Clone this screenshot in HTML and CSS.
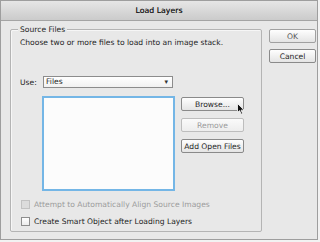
FILE: index.html
```html
<!DOCTYPE html>
<html lang="en">
<head>
  <meta charset="UTF-8">
  <title>Load Layers</title>
  <link rel="stylesheet" href="styles.css">
</head>
<body>
  <div class="window">
    <div class="titlebar">Load Layers</div>
    <div class="content">
      <div class="group">
        <span class="legend">Source Files</span>
        <p class="desc">Choose two or more files to load into an image stack.</p>

        <div class="use-row">
          <label class="use-label">Use:</label>
          <div class="select">
            <span>Files</span>
            <span class="arrow">&#9662;</span>
          </div>
        </div>

        <div class="files-row">
          <div class="listbox"></div>
          <div class="file-buttons">
            <button class="btn">Browse...</button>
            <button class="btn disabled">Remove</button>
            <button class="btn">Add Open Files</button>
            <!-- mouse pointer over Browse -->
            <svg class="cursor" width="8" height="12" viewBox="0 0 8 12">
              <path d="M0.5 0.5 L0.5 9.5 L2.6 7.6 L4.2 11.2 L5.6 10.6 L4.1 7.1 L7 7.1 Z" fill="#111" stroke="#fff" stroke-width="0.8"/>
            </svg>
          </div>
        </div>

        <div class="check disabled">
          <span class="box"></span>
          <span>Attempt to Automatically Align Source Images</span>
        </div>
        <div class="check">
          <span class="box"></span>
          <span>Create Smart Object after Loading Layers</span>
        </div>
      </div>

      <div class="side-buttons">
        <button class="btn default">OK</button>
        <button class="btn">Cancel</button>
      </div>
    </div>
  </div>
</body>
</html>
```

FILE: styles.css
```css
/* Load Layers dialog */
body {
  margin: 0;
  padding: 0;
  width: 320px;
  height: 242px;
  background-color: #f2f2f2;
  font-family: "DejaVu Sans", sans-serif;
  font-size: 7.6px;
  color: #1e1e1e;
  overflow: hidden;
}

.window {
  width: 316px;
  height: 238px;
  border: 1px solid #9e9e9e;
  background-color: #e8e8e8;
}

.titlebar {
  height: 19px;
  line-height: 19px;
  text-align: center;
  font-size: 7.8px;
  color: #1a1a1a;
  text-shadow: 0 0 0.2px #555;
  background: linear-gradient(#e6e6e6, #cbcbcb);
  border-bottom: 1px solid #a4a4a4;
}

.content {
  display: flex;
  padding: 8px 0 0 9px;
}

.group {
  position: relative;
  width: 241px;
  height: 201px;
  border: 1px solid #b4b4b4;
  border-radius: 2px;
  box-shadow: inset 1px 1px 0 #f6f6f6;
  padding-left: 9px;
  box-sizing: content-box;
}

.legend {
  position: absolute;
  top: -6px;
  left: 7px;
  padding: 0 2px;
  background-color: #e8e8e8;
  line-height: 11px;
}

.desc {
  margin: 7px 0 0 0;
  line-height: 11px;
}

.use-row {
  display: flex;
  align-items: center;
  margin-top: 28px;
  height: 12px;
}

.use-label {
  width: 23px;
}

.select {
  position: relative;
  width: 126px;
  height: 10px;
  line-height: 10px;
  padding-left: 2px;
  border: 1px solid #8c8c8c;
  background: linear-gradient(#ffffff, #f1f1f1);
}

.select .arrow {
  position: absolute;
  right: 4px;
  top: 0;
  font-size: 7px;
  color: #333;
}

.files-row {
  display: flex;
  margin-top: 8px;
  margin-left: 22px;
  height: 95px;
}

.listbox {
  width: 129px;
  height: 91px;
  background-color: #fcfcfc;
  border: 2px solid #74b6e6;
}

.file-buttons {
  position: relative;
  display: flex;
  flex-direction: column;
  gap: 7px;
  margin-left: 6px;
  margin-top: 1px;
}

.btn {
  display: block;
  width: 63px;
  height: 14px;
  padding: 0;
  font-family: "DejaVu Sans", sans-serif;
  font-size: 7.6px;
  color: #1e1e1e;
  border: 1px solid #8a8a8a;
  border-radius: 2px;
  background: linear-gradient(#fefefe, #e4e4e4);
}

.btn.disabled {
  color: #9a9a9a;
  border-color: #bdbdbd;
  background: linear-gradient(#fafafa, #ededed);
}

.btn.default {
  color: #555;
  border-color: #a0a0a0;
}

.cursor {
  position: absolute;
  left: 56px;
  top: 6px;
}

.check {
  display: flex;
  align-items: center;
  height: 11px;
  margin-left: 1px;
}

.files-row + .check {
  margin-top: 8px;
}

.check + .check {
  margin-top: 6px;
}

.check .box {
  width: 7px;
  height: 7px;
  margin-right: 4px;
  border: 1px solid #8e8e8e;
  background: linear-gradient(#ffffff, #ececec);
}

.check.disabled {
  color: #9c9c9c;
}

.check.disabled .box {
  border-color: #c2c2c2;
  background: #dcdcdc;
}

.side-buttons {
  display: flex;
  flex-direction: column;
  gap: 6px;
  margin-left: 7px;
}

.side-buttons .btn {
  width: 47px;
}
```
